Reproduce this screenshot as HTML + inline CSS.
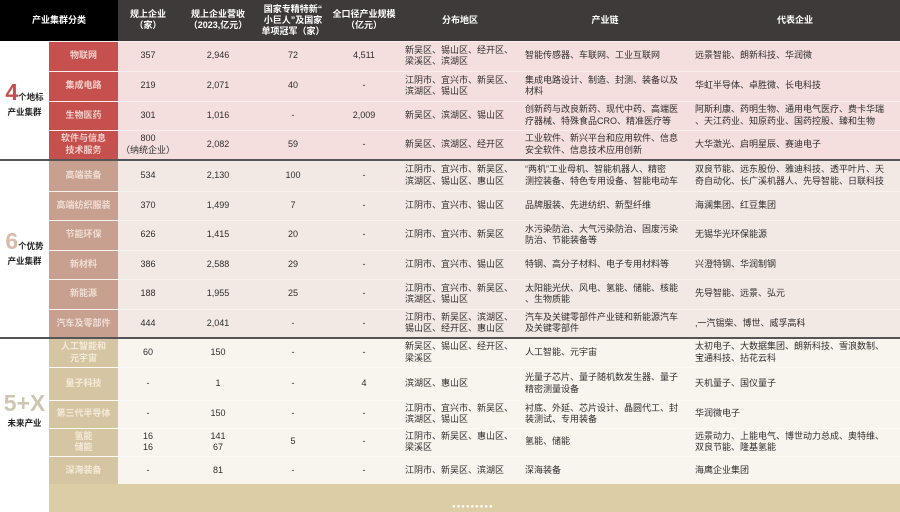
<!DOCTYPE html>
<html><head><meta charset="utf-8"><style>
*{margin:0;padding:0;box-sizing:border-box}
body{width:900px;height:512px;overflow:hidden;background:#fff;font-family:"Liberation Sans","Noto Sans CJK SC",sans-serif;color:#333}
table{border-collapse:collapse;table-layout:fixed;width:900px;position:absolute;left:0;top:0}
td{padding:0;font-size:9px;line-height:11.5px;text-align:center;vertical-align:middle;overflow:hidden;white-space:nowrap;color:#2e2e2e}
thead td{color:#fff;font-weight:bold;font-size:9px;line-height:11px;background:#3d3a39;height:41px}
thead td.b{background:#000}
td.t{text-align:left;padding-left:5px}
.g1 td{background:#f5dede;border-top:1px solid #fbeeee}
.g1 td.s{background:#c5504d;color:#f3d0cc;font-weight:bold}
.g2 td{background:#f2e8e4;border-top:1px solid #f9f3f0}
.g2 td.s{background:#c7a090;color:#f0ddd4;font-weight:bold}
.g3 td{background:#f8f4ee;border-top:1px solid #fcfaf6}
.g3 td.s{background:#d6c5a3;color:#f3ead8;font-weight:bold}
td.c{background:#fff!important;border-top:none!important;font-weight:bold;color:#222;font-size:8.5px;line-height:15px}
.big{font-size:23px;font-weight:bold;line-height:23px}
.sep td{border-top:2px solid #555!important}
.bar{position:absolute;left:49px;top:484px;width:851px;height:28px;background:#dccda5}
.dots{position:absolute;left:452px;top:504px;font-size:6px;color:#fff;letter-spacing:1px}
</style></head><body>
<table>
<colgroup><col style="width:49px"><col style="width:69px"><col style="width:60px"><col style="width:80px"><col style="width:70px"><col style="width:72px"><col style="width:120px"><col style="width:170px"><col style="width:210px"></colgroup>
<thead><tr><td class="b" colspan="2">产业集群分类</td><td>规上企业<br>（家）</td><td>规上企业营收<br>（2023,亿元）</td><td>国家专精特新“<br>小巨人”及国家<br>单项冠军（家）</td><td>全口径产业规模<br>（亿元）</td><td>分布地区</td><td>产业链</td><td>代表企业</td></tr></thead>
<tbody>
<tr class="g1" style="height:30px"><td class="c" rowspan="4"><span class="big" style="color:#c5504d">4</span>个地标<br>产业集群</td><td class="s">物联网</td><td>357</td><td>2,946</td><td>72</td><td>4,511</td><td class="t">新吴区、锡山区、经开区、<br>梁溪区、滨湖区</td><td class="t">智能传感器、车联网、工业互联网</td><td class="t">远景智能、朗新科技、华润微</td></tr>
<tr class="g1" style="height:30px"><td class="s">集成电路</td><td>219</td><td>2,071</td><td>40</td><td>-</td><td class="t">江阴市、宜兴市、新吴区、<br>滨湖区、锡山区</td><td class="t">集成电路设计、制造、封测、装备以及<br>材料</td><td class="t">华虹半导体、卓胜微、长电科技</td></tr>
<tr class="g1" style="height:29px"><td class="s">生物医药</td><td>301</td><td>1,016</td><td>-</td><td>2,009</td><td class="t">新吴区、滨湖区、锡山区</td><td class="t">创新药与改良新药、现代中药、高端医<br>疗器械、特殊食品CRO、精准医疗等</td><td class="t">阿斯利康、药明生物、通用电气医疗、费卡华瑞<br>、天江药业、知原药业、国药控股、臻和生物</td></tr>
<tr class="g1" style="height:30px"><td class="s">软件与信息<br>技术服务</td><td>800<br>（纳统企业）</td><td>2,082</td><td>59</td><td>-</td><td class="t">新吴区、滨湖区、经开区</td><td class="t">工业软件、新兴平台和应用软件、信息<br>安全软件、信息技术应用创新</td><td class="t">大华激光、启明星辰、赛迪电子</td></tr>
<tr class="g2 sep" style="height:31px"><td class="c" rowspan="6" style="border-top:2px solid #555!important"><span class="big" style="color:#d9bba9">6</span>个优势<br>产业集群</td><td class="s">高端装备</td><td>534</td><td>2,130</td><td>100</td><td>-</td><td class="t">江阴市、宜兴市、新吴区、<br>滨湖区、锡山区、惠山区</td><td class="t">“两机”工业母机、智能机器人、精密<br>测控装备、特色专用设备、智能电动车</td><td class="t">双良节能、远东股份、雅迪科技、透平叶片、天<br>奇自动化、长广溪机器人、先导智能、日联科技</td></tr>
<tr class="g2" style="height:29px"><td class="s">高端纺织服装</td><td>370</td><td>1,499</td><td>7</td><td>-</td><td class="t">江阴市、宜兴市、锡山区</td><td class="t">品牌服装、先进纺织、新型纤维</td><td class="t">海澜集团、红豆集团</td></tr>
<tr class="g2" style="height:30px"><td class="s">节能环保</td><td>626</td><td>1,415</td><td>20</td><td>-</td><td class="t">江阴市、宜兴市、新吴区</td><td class="t">水污染防治、大气污染防治、固废污染<br>防治、节能装备等</td><td class="t">无锡华光环保能源</td></tr>
<tr class="g2" style="height:29px"><td class="s">新材料</td><td>386</td><td>2,588</td><td>29</td><td>-</td><td class="t">江阴市、宜兴市、锡山区</td><td class="t">特钢、高分子材料、电子专用材料等</td><td class="t">兴澄特钢、华润制钢</td></tr>
<tr class="g2" style="height:30px"><td class="s">新能源</td><td>188</td><td>1,955</td><td>25</td><td>-</td><td class="t">江阴市、宜兴市、新吴区、<br>滨湖区、锡山区</td><td class="t">太阳能光伏、风电、氢能、储能、核能<br>、生物质能</td><td class="t">先导智能、远景、弘元</td></tr>
<tr class="g2" style="height:29px"><td class="s">汽车及零部件</td><td>444</td><td>2,041</td><td>-</td><td>-</td><td class="t">江阴市、新吴区、滨湖区、<br>锡山区、经开区、惠山区</td><td class="t">汽车及关键零部件产业链和新能源汽车<br>及关键零部件</td><td class="t">,一汽锡柴、博世、威孚高科</td></tr>
<tr class="g3 sep" style="height:29px"><td class="c" rowspan="5" style="border-top:2px solid #555!important"><span class="big" style="color:#cdc6b0">5+X</span><br>未来产业</td><td class="s">人工智能和<br>元宇宙</td><td>60</td><td>150</td><td>-</td><td>-</td><td class="t">新吴区、锡山区、经开区、<br>梁溪区</td><td class="t">人工智能、元宇宙</td><td class="t">太初电子、大数据集团、朗新科技、雪浪数制、<br>宝通科技、拈花云科</td></tr>
<tr class="g3" style="height:33px"><td class="s">量子科技</td><td>-</td><td>1</td><td>-</td><td>4</td><td class="t">滨湖区、惠山区</td><td class="t">光量子芯片、量子随机数发生器、量子<br>精密测量设备</td><td class="t">天机量子、国仪量子</td></tr>
<tr class="g3" style="height:28px"><td class="s">第三代半导体</td><td>-</td><td>150</td><td>-</td><td>-</td><td class="t">江阴市、宜兴市、新吴区、<br>滨湖区、锡山区</td><td class="t">衬底、外延、芯片设计、晶圆代工、封<br>装测试、专用装备</td><td class="t">华润微电子</td></tr>
<tr class="g3" style="height:28px"><td class="s">氢能<br>储能</td><td>16<br>16</td><td>141<br>67</td><td>5</td><td>-</td><td class="t">江阴市、新吴区、惠山区、<br>梁溪区</td><td class="t">氢能、储能</td><td class="t">远景动力、上能电气、博世动力总成、奥特维、<br>双良节能、隆基氢能</td></tr>
<tr class="g3" style="height:28px"><td class="s">深海装备</td><td>-</td><td>81</td><td>-</td><td>-</td><td class="t">江阴市、新吴区、滨湖区</td><td class="t">深海装备</td><td class="t">海鹰企业集团</td></tr>
</tbody></table>
<div class="bar"></div>
<div class="dots">●●●●●●●●●</div>
</body></html>
